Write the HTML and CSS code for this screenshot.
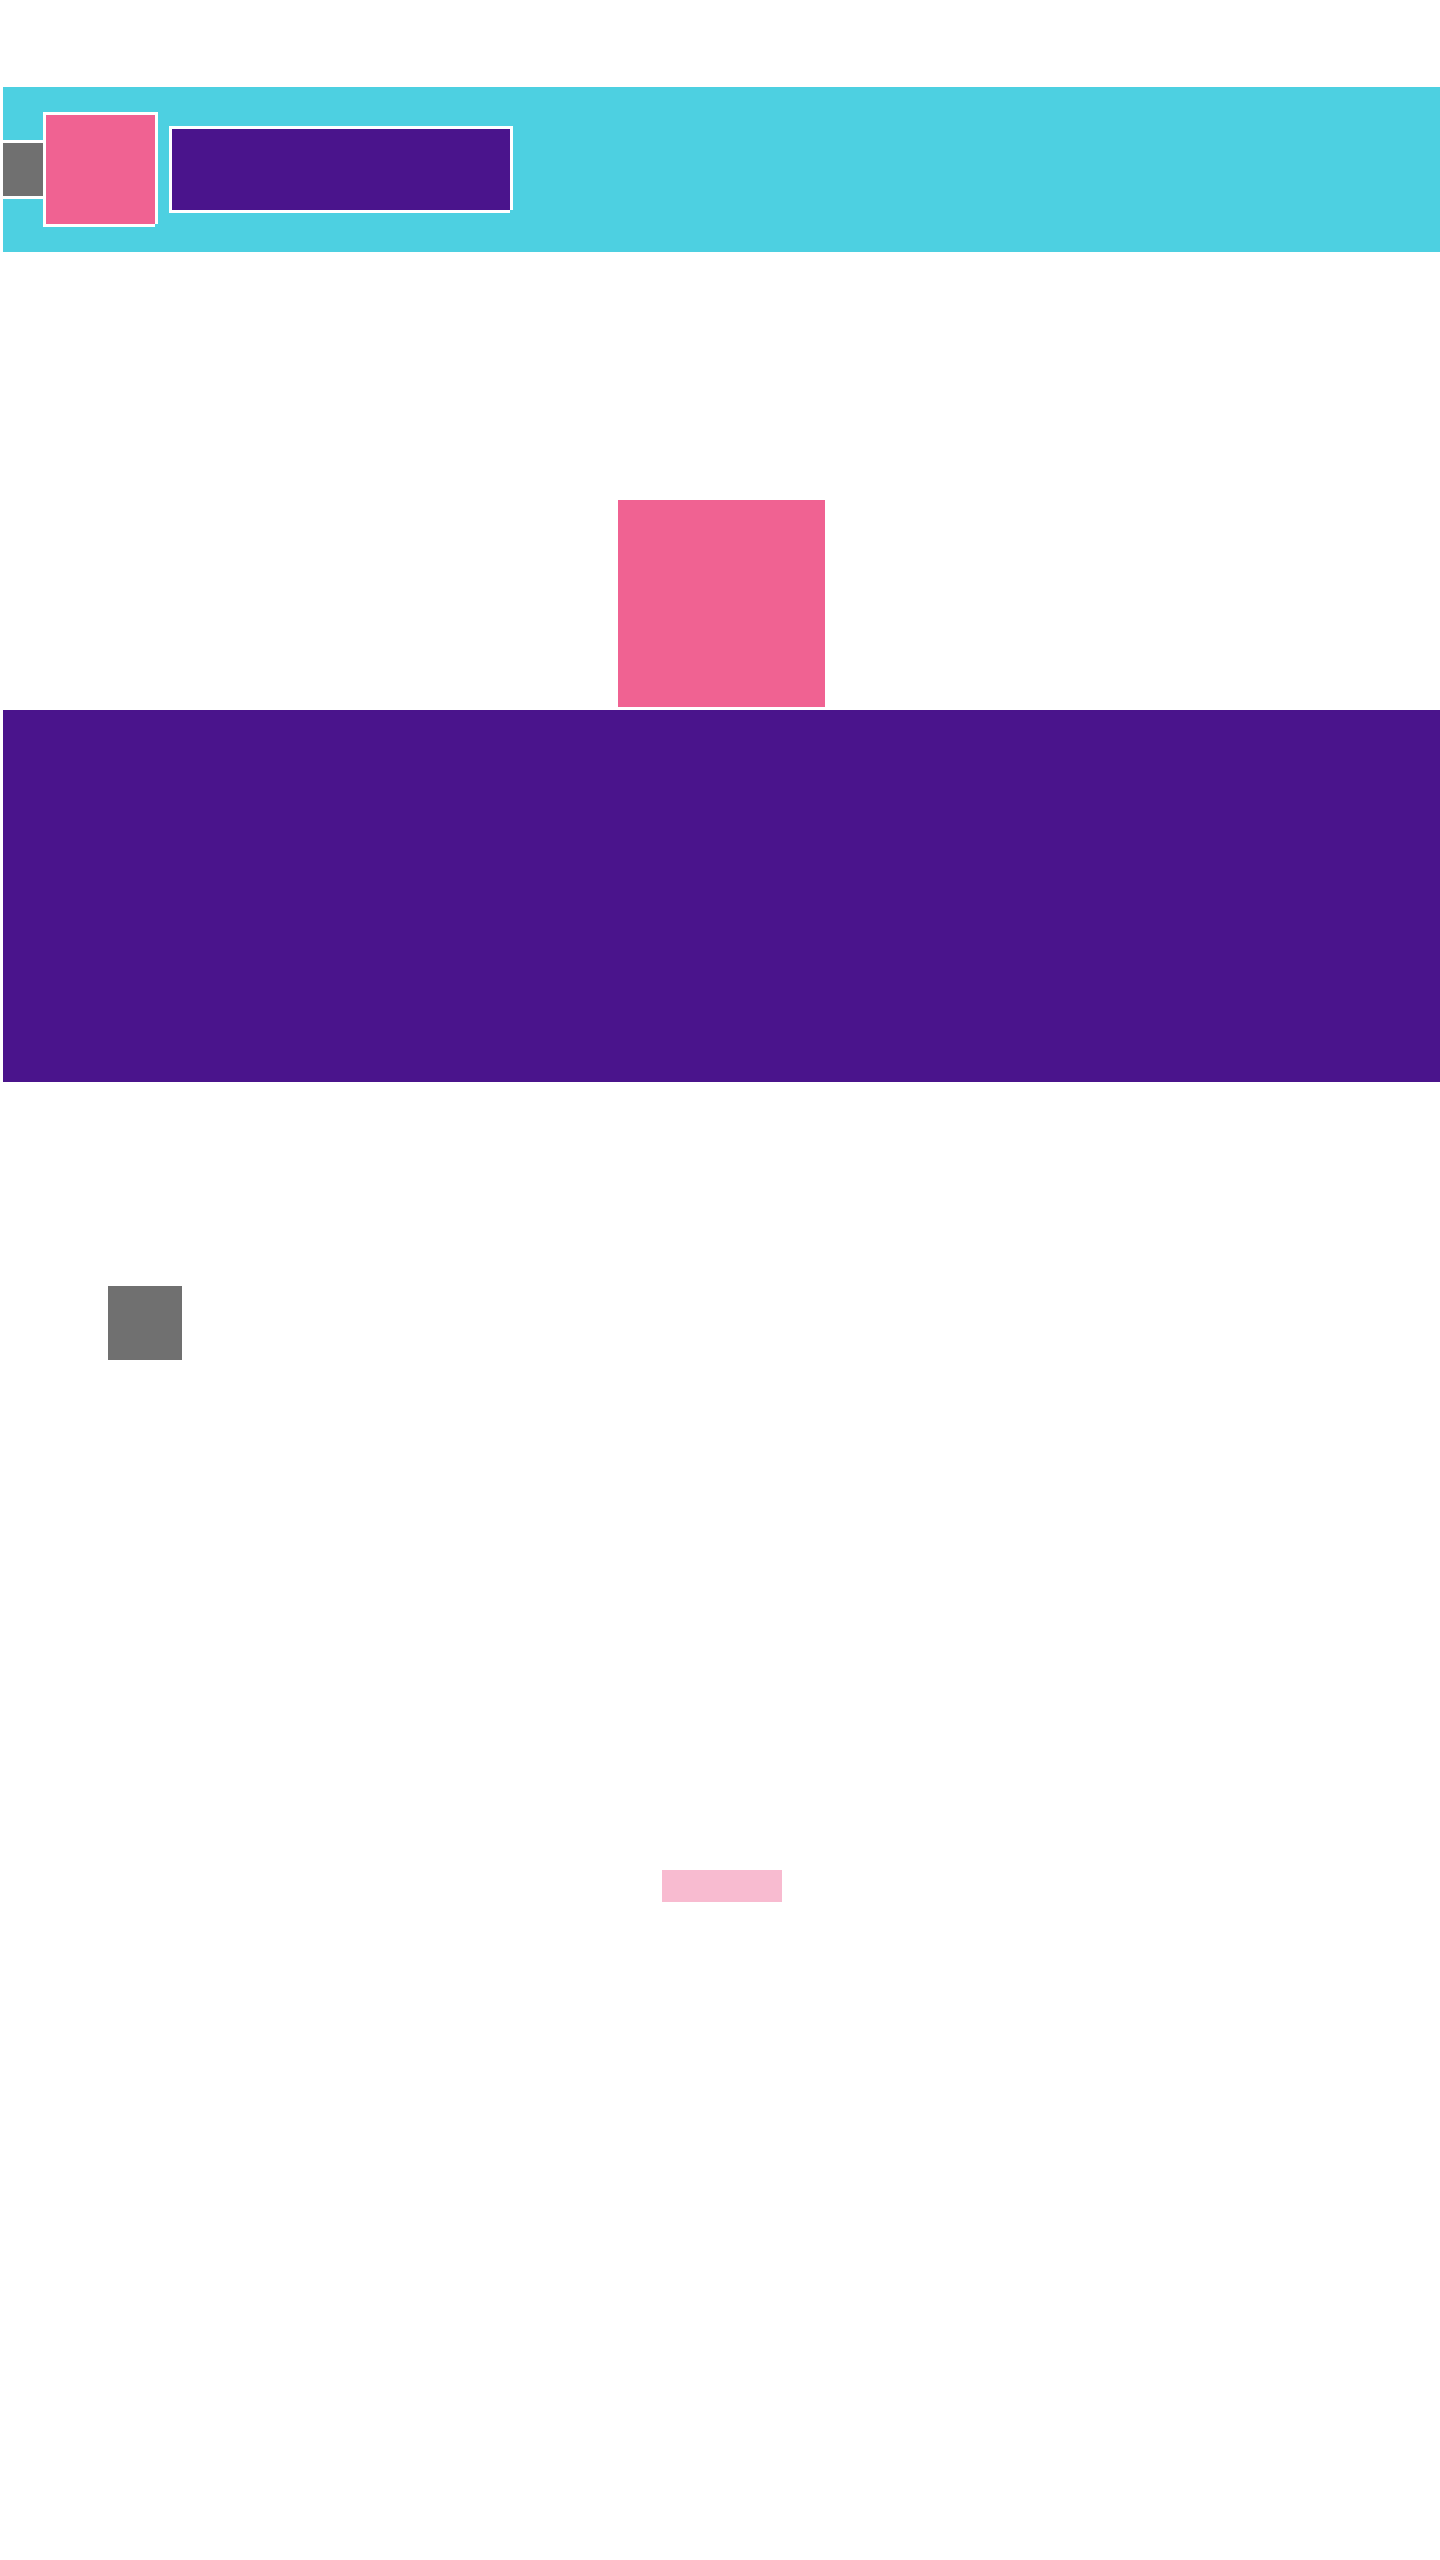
FILE: index.html
```html
<!DOCTYPE html>
<html lang="en">
<head>
    <meta charset="UTF-8">
    <title>Blocks</title>
    <link rel="stylesheet" href="styles.css">
</head>
<body>
    <div class="page">
        <div class="header">
            <div class="back"></div>
            <div class="logo framed"></div>
            <div class="title framed"></div>
        </div>
        <div class="hero">
            <div class="avatar"></div>
        </div>
        <div class="banner"></div>
        <div class="section">
            <div class="icon"></div>
        </div>
        <div class="footer">
            <div class="tag"></div>
        </div>
    </div>
</body>
</html>
```
FILE: styles.css
```css
body { margin: 0; background: #fff; font-family: "Liberation Sans", Arial, sans-serif; }
.page { margin-left: 3px; padding-top: 87px; min-height: 2473px; }
.header { height: 165px; background: #4dd0e1; display: flex; align-items: center; }
.back { width: 40px; height: 53px; background: #707070; border-top: 3px solid #fff; border-bottom: 3px solid #fff; }
.framed { position: relative; border: 3px solid #fff; }
.framed::after { content: ""; position: absolute; right: -3px; bottom: -3px; width: 3px; height: 3px; background: #4dd0e1; }
.logo { width: 109px; height: 109px; background: #f06292; }
.title { width: 338px; height: 81px; background: #4a148c; margin-left: 11px; margin-top: -1px; }
.hero { display: flex; justify-content: center; padding-top: 248px; }
.avatar { width: 207px; height: 207px; background: #f06292; }
.banner { height: 372px; margin-top: 3px; background: #4a148c; }
.section { padding: 204px 0 0 105px; }
.icon { width: 74px; height: 74px; background: #707070; }
.footer { display: flex; justify-content: center; padding-top: 510px; }
.tag { width: 120px; height: 32px; background: #f8bbd0; }
```
